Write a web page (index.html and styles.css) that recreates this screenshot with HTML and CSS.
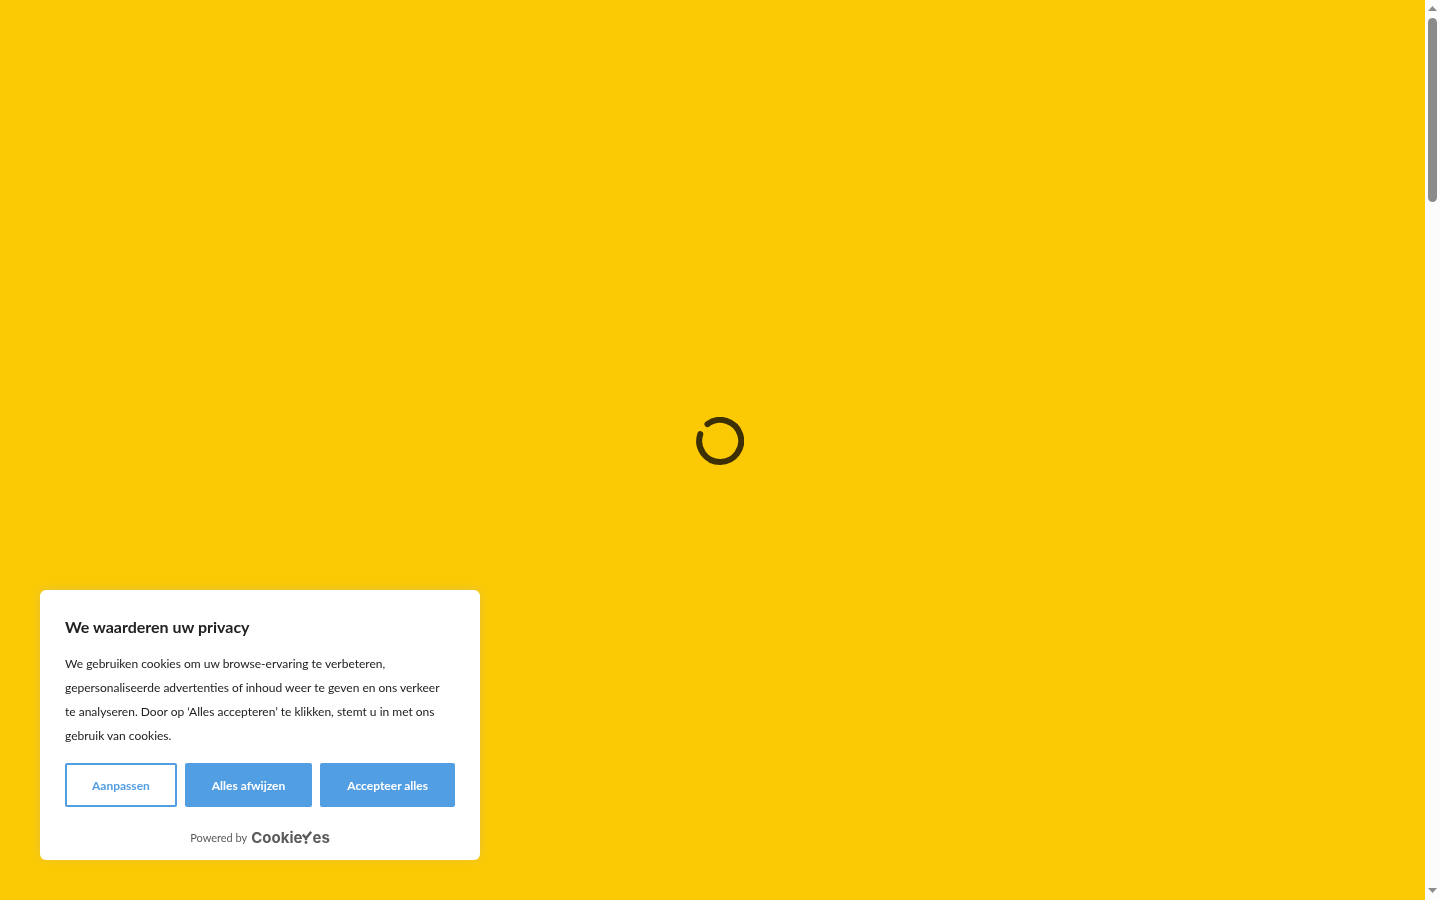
FILE: index.html
```
<!DOCTYPE html>
<html lang="nl">
<head>
  <meta charset="UTF-8">
  <meta name="viewport" content="width=device-width, initial-scale=1.0">
  <title>We waarderen uw privacy</title>
  <link rel="stylesheet" href="styles.css">
</head>
<body>
  <main class="preloader">
    <svg class="spinner" viewBox="0 0 48 48" role="img" aria-label="Laden">
      <path d="M11.5 7.2A21 21 0 1 1 4.3 17.2"/>
    </svg>
  </main>

  <section class="consent" aria-labelledby="consent-title">
    <h2 class="consent-title" id="consent-title">We waarderen uw privacy</h2>
    <p class="consent-text">We gebruiken cookies om uw browse-ervaring te verbeteren, gepersonaliseerde advertenties of inhoud weer te geven en ons verkeer te analyseren. Door op ‘Alles accepteren’ te klikken, stemt u in met ons gebruik van cookies.</p>
    <div class="consent-buttons">
      <button type="button" class="btn btn-outline">Aanpassen</button>
      <button type="button" class="btn">Alles afwijzen</button>
      <button type="button" class="btn">Accepteer alles</button>
    </div>
    <div class="powered">
      <span>Powered by</span>
      <a href="#" class="brand" aria-label="CookieYes">Cookie<svg class="brand-y" viewBox="0 0 10 13" aria-hidden="true"><path d="M0.8 3.6L4 7.2L9.2 0.8M4 7V9.2"/><circle cx="4" cy="11.5" r="1.4"/></svg>es</a>
    </div>
  </section>

  <div class="scrollbar" aria-hidden="true">
    <svg class="arrow" viewBox="0 0 9 5"><path d="M0 5L4.5 0L9 5Z"/></svg>
    <div class="track"><div class="thumb"></div></div>
    <svg class="arrow" viewBox="0 0 9 5"><path d="M0 0L4.5 5L9 0Z"/></svg>
  </div>
</body>
</html>
```
FILE: styles.css
```
* { box-sizing: border-box; }
body { margin: 0; font-family: Lato, sans-serif; color: #212121; background: #fcca05; }

.preloader { display: flex; align-items: center; justify-content: center; min-height: 100vh; padding-bottom: 18px; }
.spinner { width: 48px; height: 48px; }
.spinner path { fill: none; stroke: #3d3004; stroke-width: 6; stroke-linecap: round; }

.consent {
  position: fixed;
  left: 40px;
  bottom: 40px;
  width: 440px;
  max-width: calc(100% - 80px);
  padding: 25px 25px 12px;
  background: #fff;
  border-radius: 6px;
  box-shadow: 0 -1px 10px rgba(172, 171, 171, 0.3);
}
.consent-title { margin: 0 0 13px; font-size: 16px; line-height: 24px; font-weight: 700; }
.consent-text { margin: 0 0 15px; padding-right: 5px; font-size: 12px; line-height: 24px; }

.consent-buttons { display: flex; gap: 8px; }
.btn {
  flex: auto;
  height: 44px;
  padding: 0 24px;
  border: 2px solid #529ee3;
  border-radius: 2px;
  background: #529ee3;
  color: #fff;
  font-family: inherit;
  font-size: 12px;
  font-weight: 700;
  white-space: nowrap;
  cursor: pointer;
}
.btn-outline { background: transparent; color: #529ee3; }

.powered { display: flex; align-items: center; justify-content: center; gap: 4px; margin-top: 20px; font-size: 11px; line-height: 21px; color: #5b5b5b; }
.brand { display: flex; align-items: center; color: #5b5b5b; font-family: Inter, sans-serif; font-size: 15px; font-weight: 700; text-decoration: none; }
.brand-y { width: 10px; height: 13px; }
.brand-y path { fill: none; stroke: currentColor; stroke-width: 2.4; }
.brand-y circle { fill: currentColor; }

.scrollbar { position: fixed; top: 0; right: 0; bottom: 0; width: 15px; display: flex; flex-direction: column; align-items: center; padding: 6px 0 7px; background: #fcfcfc; }
.arrow { width: 9px; height: 5px; fill: #8b8b8b; }
.track { flex: 1; padding: 7px 0; }
.thumb { width: 9px; height: 21.3%; border-radius: 5px; background: #8b8b8b; }
```
